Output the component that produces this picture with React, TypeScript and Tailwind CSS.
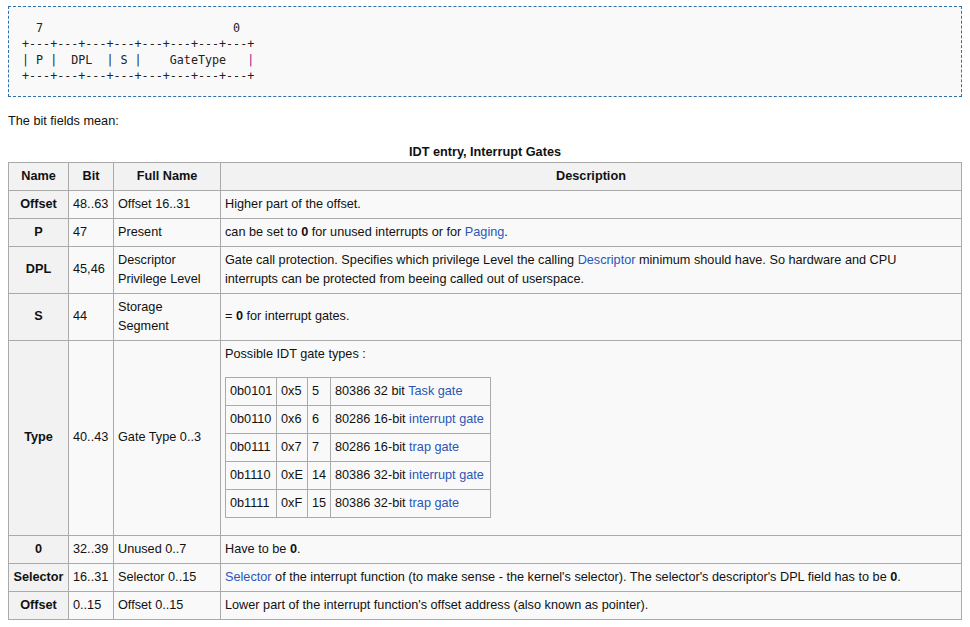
import React from "react";

const link = "text-[#2a56b8]";

type Gate = { bin: string; hex: string; dec: string; pre: string; link: string };

const gates: Gate[] = [
  { bin: "0b0101", hex: "0x5", dec: "5", pre: "80386 32 bit ", link: "Task gate" },
  { bin: "0b0110", hex: "0x6", dec: "6", pre: "80286 16-bit ", link: "interrupt gate" },
  { bin: "0b0111", hex: "0x7", dec: "7", pre: "80286 16-bit ", link: "trap gate" },
  { bin: "0b1110", hex: "0xE", dec: "14", pre: "80386 32-bit ", link: "interrupt gate" },
  { bin: "0b1111", hex: "0xF", dec: "15", pre: "80386 32-bit ", link: "trap gate" },
];

const th = "border border-[#aaa] bg-[#f2f2f2] px-[4px] py-[4px] text-center font-bold";
const td = "border border-[#aaa] px-[4px] py-[4px] text-left align-middle";

function Row({
  name,
  bit,
  full,
  children,
  top = false,
}: {
  name: string;
  bit: string;
  full: React.ReactNode;
  children: React.ReactNode;
  top?: boolean;
}) {
  return (
    <tr>
      <th className={th}>{name}</th>
      <td className={td}>{bit}</td>
      <td className={td}>{full}</td>
      <td className={top ? td + " !align-top" : td}>{children}</td>
    </tr>
  );
}

export default function App() {
  return (
    <div className="min-h-[627px] bg-white px-2 pt-[6px] font-['Liberation_Sans',Arial,sans-serif] text-[12.7px] leading-[19px] text-[#111]">
      <pre className="border border-dashed border-[#2f6fab] bg-[#f9f9f9] px-[13px] py-[12.7px] font-['DejaVu_Sans_Mono',monospace] text-[11.7px] leading-[16px] text-[#222]">
        {"  7                           0\n+---+---+---+---+---+---+---+---+\n| P |  DPL  | S |    GateType   "}
        <span className="text-[#8a1a8a]">|</span>
        {"\n+---+---+---+---+---+---+---+---+"}
      </pre>

      <p className="mt-[15px]">The bit fields mean:</p>

      <table className="mt-[11.5px] w-full table-fixed border-collapse bg-[#f9f9f9]">
        <caption className="bg-white font-bold">IDT entry, Interrupt Gates</caption>
        <colgroup>
          <col className="w-[60px]" />
          <col className="w-[45px]" />
          <col className="w-[107px]" />
          <col />
        </colgroup>
        <thead>
          <tr>
            <th className={th}>Name</th>
            <th className={th}>Bit</th>
            <th className={th}>Full Name</th>
            <th className={th}>Description</th>
          </tr>
        </thead>
        <tbody>
          <Row name="Offset" bit="48..63" full="Offset 16..31">
            Higher part of the offset.
          </Row>
          <Row name="P" bit="47" full="Present">
            can be set to <b>0</b> for unused interrupts or for <span className={link}>Paging</span>.
          </Row>
          <Row
            name="DPL"
            bit="45,46"
            full={
              <>
                Descriptor
                <br />
                Privilege Level
              </>
            }
          >
            Gate call protection. Specifies which privilege Level the calling{" "}
            <span className={link}>Descriptor</span> minimum should have. So hardware and CPU
            <br />
            interrupts can be protected from beeing called out of userspace.
          </Row>
          <Row
            name="S"
            bit="44"
            full={
              <>
                Storage
                <br />
                Segment
              </>
            }
          >
            = <b>0</b> for interrupt gates.
          </Row>
          <Row name="Type" bit="40..43" full="Gate Type 0..3" top>
            <p>Possible IDT gate types :</p>
            <table className="my-[13px] w-[266px] table-fixed border-collapse">
              <colgroup>
                <col className="w-[51px]" />
                <col className="w-[31px]" />
                <col className="w-[23px]" />
                <col />
              </colgroup>
              <tbody>
                {gates.map((g) => (
                  <tr key={g.bin}>
                    <td className={td}>{g.bin}</td>
                    <td className={td}>{g.hex}</td>
                    <td className={td}>{g.dec}</td>
                    <td className={td + " whitespace-nowrap"}>
                      {g.pre}
                      <span className={link}>{g.link}</span>
                    </td>
                  </tr>
                ))}
              </tbody>
            </table>
          </Row>
          <Row name="0" bit="32..39" full="Unused 0..7">
            Have to be <b>0</b>.
          </Row>
          <Row name="Selector" bit="16..31" full="Selector 0..15">
            <span className={link}>Selector</span> of the interrupt function (to make sense - the
            kernel's selector). The selector's descriptor's DPL field has to be <b>0</b>.
          </Row>
          <Row name="Offset" bit="0..15" full="Offset 0..15">
            Lower part of the interrupt function's offset address (also known as pointer).
          </Row>
        </tbody>
      </table>
    </div>
  );
}
